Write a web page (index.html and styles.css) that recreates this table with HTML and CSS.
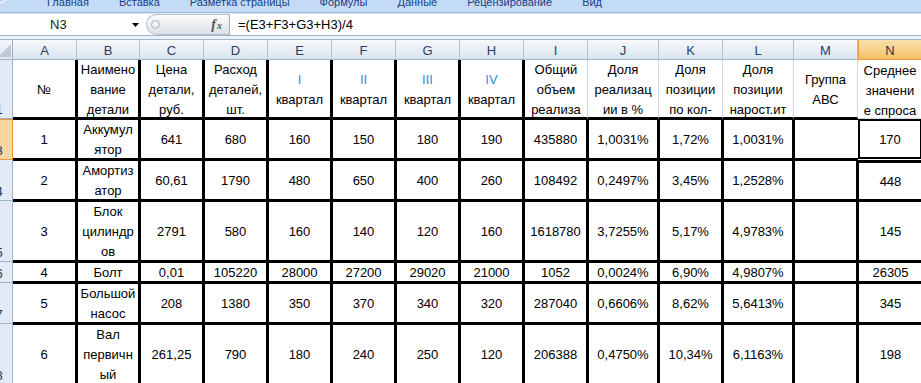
FILE: index.html
```html
<!DOCTYPE html>
<html lang="ru">
<head>
<meta charset="utf-8">
<title>Excel</title>
<link rel="stylesheet" href="styles.css">
</head>
<body>
<div class="app">
  <div class="tabs">
    <span class="orb"></span>
    <span class="tab">Главная</span>
    <span class="tab">Вставка</span>
    <span class="tab">Разметка страницы</span>
    <span class="tab">Формулы</span>
    <span class="tab">Данные</span>
    <span class="tab">Рецензирование</span>
    <span class="tab">Вид</span>
  </div>
  <div class="fbar">
    <div class="namebox">
      <span class="nb-text">N3</span>
      <svg class="nb-arrow" width="7" height="4" viewBox="0 0 7 4"><path d="M0 0H7L3.5 4Z" fill="#000"/></svg>
    </div>
    <div class="fxbtn">
      <span class="knob"></span>
      <span class="fx"><i class="fx-f">f</i><i class="fx-x">x</i></span>
    </div>
    <div class="formula">=(E3+F3+G3+H3)/4</div>
  </div>
  <div class="gap"></div>
  <div class="sheet">
    <div class="corner"><svg width="13" height="21" viewBox="0 0 13 21"><polygon points="11,5 11,18 -2,18" fill="#bfcad8"/></svg></div>
    <div class="ch">A</div>
    <div class="ch">B</div>
    <div class="ch">C</div>
    <div class="ch">D</div>
    <div class="ch">E</div>
    <div class="ch">F</div>
    <div class="ch">G</div>
    <div class="ch">H</div>
    <div class="ch">I</div>
    <div class="ch">J</div>
    <div class="ch">K</div>
    <div class="ch">L</div>
    <div class="ch">M</div>
    <div class="ch chsel">N</div>

    <div class="rh"><span>1</span></div>
    <div class="c a t"><span>№</span></div>
    <div class="c t"><span>Наимено<br>вание<br>детали</span></div>
    <div class="c t"><span>Цена<br>детали,<br>руб.</span></div>
    <div class="c t"><span>Расход<br>деталей,<br>шт.</span></div>
    <div class="c t"><span><b class="rn">I</b><br>квартал</span></div>
    <div class="c t"><span><b class="rn">II</b><br>квартал</span></div>
    <div class="c t"><span><b class="rn">III</b><br>квартал</span></div>
    <div class="c t"><span><b class="rn">IV</b><br>квартал</span></div>
    <div class="c t gi"><span>Общий<br>объем<br>реализа</span></div>
    <div class="c t g"><span>Доля<br>реализац<br>ии в %</span></div>
    <div class="c t g"><span>Доля<br>позиции<br>по кол-</span></div>
    <div class="c t g"><span>Доля<br>позиции<br>нарост.ит</span></div>
    <div class="c t g"><span>Группа<br>АВС</span></div>
    <div class="c t n1"><span>Среднее<br>значени<br>е спроса</span></div>

    <div class="rh rhsel"><span>3</span></div>
    <div class="c a"><span>1</span></div>
    <div class="c"><span>Аккумул<br>ятор</span></div>
    <div class="c"><span>641</span></div>
    <div class="c"><span>680</span></div>
    <div class="c"><span>160</span></div>
    <div class="c"><span>150</span></div>
    <div class="c"><span>180</span></div>
    <div class="c"><span>190</span></div>
    <div class="c"><span>435880</span></div>
    <div class="c"><span>1,0031%</span></div>
    <div class="c"><span>1,72%</span></div>
    <div class="c"><span>1,0031%</span></div>
    <div class="c m3"></div>
    <div class="c sel"><span>170</span></div>

    <div class="rh"><span>4</span></div>
    <div class="c a"><span>2</span></div>
    <div class="c"><span>Амортиз<br>атор</span></div>
    <div class="c"><span>60,61</span></div>
    <div class="c"><span>1790</span></div>
    <div class="c"><span>480</span></div>
    <div class="c"><span>650</span></div>
    <div class="c"><span>400</span></div>
    <div class="c"><span>260</span></div>
    <div class="c"><span>108492</span></div>
    <div class="c"><span>0,2497%</span></div>
    <div class="c"><span>3,45%</span></div>
    <div class="c"><span>1,2528%</span></div>
    <div class="c"></div>
    <div class="c n n4"><span>448</span></div>

    <div class="rh"><span>5</span></div>
    <div class="c a"><span>3</span></div>
    <div class="c"><span>Блок<br>цилиндр<br>ов</span></div>
    <div class="c"><span>2791</span></div>
    <div class="c"><span>580</span></div>
    <div class="c"><span>160</span></div>
    <div class="c"><span>140</span></div>
    <div class="c"><span>120</span></div>
    <div class="c"><span>160</span></div>
    <div class="c"><span>1618780</span></div>
    <div class="c"><span>3,7255%</span></div>
    <div class="c"><span>5,17%</span></div>
    <div class="c"><span>4,9783%</span></div>
    <div class="c"></div>
    <div class="c n"><span>145</span></div>

    <div class="rh"><span>6</span></div>
    <div class="c a"><span>4</span></div>
    <div class="c"><span>Болт</span></div>
    <div class="c"><span>0,01</span></div>
    <div class="c"><span>105220</span></div>
    <div class="c"><span>28000</span></div>
    <div class="c"><span>27200</span></div>
    <div class="c"><span>29020</span></div>
    <div class="c"><span>21000</span></div>
    <div class="c"><span>1052</span></div>
    <div class="c"><span>0,0024%</span></div>
    <div class="c"><span>6,90%</span></div>
    <div class="c"><span>4,9807%</span></div>
    <div class="c"></div>
    <div class="c n"><span>26305</span></div>

    <div class="rh"><span>7</span></div>
    <div class="c a"><span>5</span></div>
    <div class="c"><span>Большой<br>насос</span></div>
    <div class="c"><span>208</span></div>
    <div class="c"><span>1380</span></div>
    <div class="c"><span>350</span></div>
    <div class="c"><span>370</span></div>
    <div class="c"><span>340</span></div>
    <div class="c"><span>320</span></div>
    <div class="c"><span>287040</span></div>
    <div class="c"><span>0,6606%</span></div>
    <div class="c"><span>8,62%</span></div>
    <div class="c"><span>5,6413%</span></div>
    <div class="c"></div>
    <div class="c n"><span>345</span></div>

    <div class="rh"><span>8</span></div>
    <div class="c a"><span>6</span></div>
    <div class="c"><span>Вал<br>первичн<br>ый</span></div>
    <div class="c"><span>261,25</span></div>
    <div class="c"><span>790</span></div>
    <div class="c"><span>180</span></div>
    <div class="c"><span>240</span></div>
    <div class="c"><span>250</span></div>
    <div class="c"><span>120</span></div>
    <div class="c"><span>206388</span></div>
    <div class="c"><span>0,4750%</span></div>
    <div class="c"><span>10,34%</span></div>
    <div class="c"><span>6,1163%</span></div>
    <div class="c"></div>
    <div class="c n"><span>198</span></div>
  </div>
</div>
</body>
</html>
```
FILE: styles.css
```css
* { box-sizing: border-box; margin: 0; padding: 0; }
html, body { width: 921px; height: 383px; overflow: hidden; background: #fff; }
body { font-family: "Liberation Sans", Arial, sans-serif; color: #000; }

.app { width: 921px; height: 383px; overflow: hidden; display: flex; flex-direction: column; }

/* ribbon tab strip (cut at top) */
.tabs {
  position: relative;
  flex: none;
  height: 14px;
  display: flex;
  align-items: flex-start;
  padding-left: 32px;
  overflow: hidden;
  background: linear-gradient(#c3daf5 0, #c6dcf6 12px, #98b9e2 12px, #98b9e2 13px, #e0eaf7 13px);
}
.orb {
  position: absolute;
  left: -14px;
  top: -20px;
  width: 24px;
  height: 24px;
  border-radius: 50%;
  border: 2px solid #e9eef5;
  background: #b9cde6;
}
.tab {
  font-size: 11px;
  line-height: 11px;
  margin-top: -3px;
  padding: 0 15px;
  color: #15428b;
  white-space: nowrap;
}

/* formula bar */
.fbar {
  flex: none;
  height: 22px;
  display: flex;
  background: #fff;
  border-bottom: 1px solid #9fb3cb;
}
.namebox {
  width: 141px;
  display: flex;
  align-items: center;
  justify-content: space-between;
  padding: 0 2px 0 50px;
  font-size: 13px;
}
.nb-text { color: #1a1a1a; }
.fxbtn {
  margin-left: 5px;
  width: 84px;
  display: flex;
  align-items: center;
  padding: 0 7px 0 4px;
  border: 1px solid #b5c0ce;
  border-right-color: #9eacbf;
  border-radius: 11px 0 0 11px;
  background: linear-gradient(#fdfdfd, #eceef1 50%, #dde1e7);
}
.knob {
  width: 9px;
  height: 9px;
  border-radius: 50%;
  border: 1px solid #a9b3c0;
  background: radial-gradient(circle at 40% 35%, #ffffff, #d3d9e1);
}
.fx {
  margin-left: auto;
  font-family: "Liberation Serif", "Times New Roman", serif;
  color: #555;
  display: flex;
  align-items: baseline;
}
.fx-f { font-size: 14px; font-style: italic; font-weight: bold; }
.fx-x { font-size: 10px; font-style: italic; font-weight: bold; margin-left: 1px; }
.formula {
  flex: 1;
  display: flex;
  align-items: center;
  padding-left: 8px;
  font-size: 13px;
  color: #000;
  white-space: nowrap;
}
.gap {
  flex: none;
  height: 3px;
  background: #edf2f9;
}

/* sheet grid */
.sheet {
  flex: none;
  width: 921px;
  overflow: hidden;
  display: grid;
  grid-template-columns: 13px 64px 63px 64px 64px 64px 64px 64px 64px 64px 71px 64px 71px 64px 64px;
  grid-template-rows: 21px 59px 41px 41px 61px 21px 41px 61px;
  background: #fff;
  font-size: 13px;
}
.corner {
  border-top: 1px solid #9eb6ce;
  border-bottom: 1px solid #9eb6ce;
  border-right: 1px solid #9eb6ce;
  background: linear-gradient(#f3f6fa, #dfe6ef);
  overflow: hidden;
}
.corner svg { display: block; margin-top: -1px; }
.ch {
  display: flex;
  align-items: center;
  justify-content: center;
  border-top: 1px solid #9eb6ce;
  border-bottom: 1px solid #9eb6ce;
  border-right: 1px solid #b1c3d8;
  background: linear-gradient(#f6f8fb, #e9eef5 50%, #dbe3ee);
  color: #27415f;
  padding-top: 1px;
}
.chsel {
  background: linear-gradient(#fbe0ac, #f8d18c 50%, #f1c062);
  border-left: 1px solid #f29536;
  border-bottom-color: #f29536;
  color: #1e3350;
}
.rh {
  display: flex;
  justify-content: flex-end;
  align-items: flex-end;
  overflow: hidden;
  background: #e2eaf5;
  border-right: 1px solid #9eb6ce;
  border-bottom: 1px solid #9eb6ce;
  color: #1f3554;
}
.rh span {
  flex: none;
  width: 26px;
  text-align: center;
  line-height: 16px;
}
.rhsel {
  background: #f9d89f;
  border-right-color: #f29536;
  border-bottom-color: #f29536;
  box-shadow: inset 0 1px 0 #f29536;
}

.c {
  display: flex;
  align-items: center;
  justify-content: center;
  text-align: center;
  padding-top: 2px;
  border-top: 1px solid #000;
  border-right: 2px solid #000;
  border-bottom: 2px solid #000;
  border-left: 1px solid #000;
  white-space: nowrap;
  line-height: 20px;
}
.c span { display: block; }
.a { border-left: 0; }
.t { border-top: 0; padding-top: 3px; }
.gi { border-right: 1px solid #d0d7e5; }
.g { border-left: 0; border-right: 1px solid #d0d7e5; }
.rn { font-weight: normal; color: #3a8bd6; }
.m3 { border-right: 0; }
.n { border-right: 0; }
.n1 { border-left: 0; border-right: 0; border-bottom: 1px solid #d0d7e5; }
.sel {
  border: 0;
  border-bottom: 1px solid #fff;
  box-shadow: inset 0 0 0 2px #000;
}
.n4 { border-top-width: 3px; }
```
